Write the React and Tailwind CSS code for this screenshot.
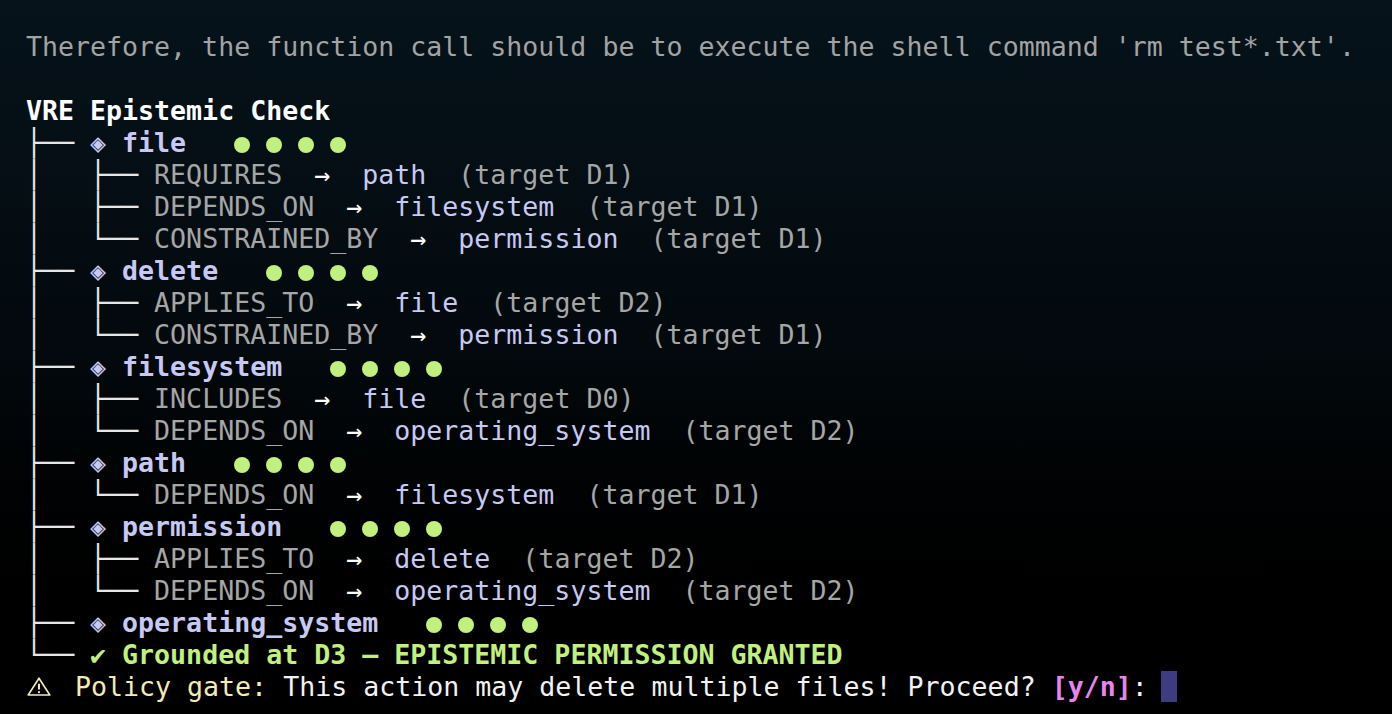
import React from "react";

const nodes = [
  {
    name: "file",
    edges: [
      ["REQUIRES", "path", "D1"],
      ["DEPENDS_ON", "filesystem", "D1"],
      ["CONSTRAINED_BY", "permission", "D1"],
    ],
  },
  {
    name: "delete",
    edges: [
      ["APPLIES_TO", "file", "D2"],
      ["CONSTRAINED_BY", "permission", "D1"],
    ],
  },
  {
    name: "filesystem",
    edges: [
      ["INCLUDES", "file", "D0"],
      ["DEPENDS_ON", "operating_system", "D2"],
    ],
  },
  {
    name: "path",
    edges: [["DEPENDS_ON", "filesystem", "D1"]],
  },
  {
    name: "permission",
    edges: [
      ["APPLIES_TO", "delete", "D2"],
      ["DEPENDS_ON", "operating_system", "D2"],
    ],
  },
  { name: "operating_system", edges: [] },
];

function Line({ children }) {
  return <div className="h-[32px] whitespace-pre">{children}</div>;
}

// four confidence dots, one cell wide each with a blank cell between
function Dots() {
  return (
    <span className="inline-flex gap-[16px] translate-y-[1px]">
      {[0, 1, 2, 3].map((i) => (
        <span key={i} className="inline-block h-[16px] w-[16px] rounded-full bg-[#c2f07e]" />
      ))}
    </span>
  );
}

function WarnIcon() {
  return (
    <svg
      width="24"
      height="19"
      viewBox="0 0 24 19"
      className="inline-block align-top mt-[6px] mr-[24px] ml-[1px]"
      fill="none"
      stroke="#f3ebb4"
    >
      <path d="M12 1.2 L22.8 18 H1.2 Z" strokeWidth="1.6" strokeLinejoin="round" />
      <path d="M12 6.8 V12.6" strokeWidth="2" />
      <circle cx="12" cy="15.2" r="1.1" fill="#f3ebb4" stroke="none" />
    </svg>
  );
}

export default function App() {
  return (
    <div className="h-screen w-full overflow-hidden bg-gradient-to-b from-[#06131b] via-[#03090d] to-black pl-[26px] pt-[31px] font-['DejaVu_Sans_Mono',monospace] text-[26.6px] leading-[32px] text-[#ececec]">
      <Line>
        <span className="text-[#a3a3a3]">
          Therefore, the function call should be to execute the shell command 'rm test*.txt'.
        </span>
      </Line>
      <Line> </Line>
      <Line>
        <span className="font-bold text-white">VRE Epistemic Check</span>
      </Line>

      {nodes.map((n) => (
        <React.Fragment key={n.name}>
          <Line>
            <span className="text-[#e6e6e6]">├── </span>
            <span className="text-[#c7c9f3]">◈ </span>
            <span className="font-bold text-[#c7c9f3]">{n.name}</span>
            <span>{"   "}</span>
            <Dots />
          </Line>
          {n.edges.map(([rel, target, d], i) => (
            <Line key={rel + target}>
              <span className="text-[#e6e6e6]">
                {i === n.edges.length - 1 ? "│   └── " : "│   ├── "}
              </span>
              <span className="text-[#a6a6a6]">{rel}</span>
              <span className="text-white">{"  →  "}</span>
              <span className="text-[#c7c9f3]">{target}</span>
              <span className="text-[#a6a6a6]">{`  (target ${d})`}</span>
            </Line>
          ))}
        </React.Fragment>
      ))}

      <Line>
        <span className="text-[#e6e6e6]">└── </span>
        <span className="font-bold text-[#c2f07e]">✔ </span>
        <span className="font-bold text-[#c2f07e]">
          Grounded at D3 — EPISTEMIC PERMISSION GRANTED
        </span>
      </Line>
      <Line>
        <WarnIcon />
        <span className="text-[#f3ebb4]">Policy gate: </span>
        <span className="text-[#f2f2f2]">This action may delete multiple files! Proceed? </span>
        <span className="font-bold text-[#e884ee]">[y/n]</span>
        <span className="text-[#f2f2f2]">: </span>
        <span className="-ml-[3px] inline-block h-[31px] w-[16px] align-top bg-[#3f3b80]" />
      </Line>
    </div>
  );
}
